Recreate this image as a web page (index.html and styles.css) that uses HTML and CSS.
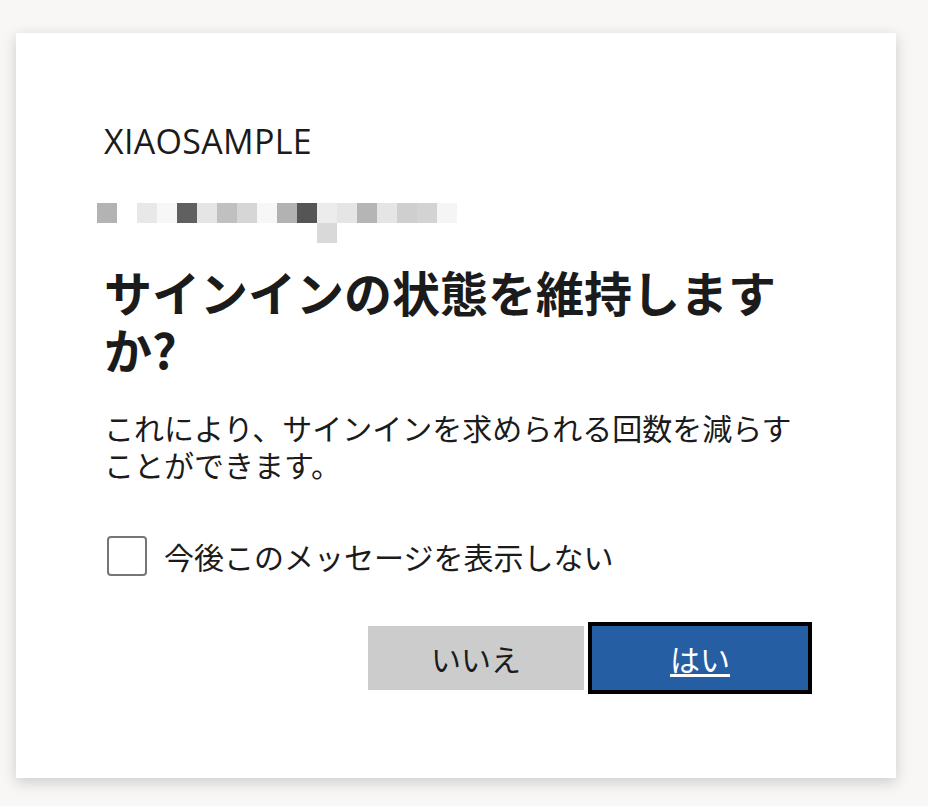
FILE: index.html
```html
<!DOCTYPE html>
<html lang="ja">
<head>
<meta charset="utf-8">
<title>サインインの状態を維持しますか?</title>
<link rel="stylesheet" href="styles.css">
</head>
<body>
<main class="card">
  <div class="brand">XIAOSAMPLE</div>
  <div class="mosaic" aria-hidden="true">
    <div class="mosaic-row">
      <span class="px" style="background:#b3b3b3"></span>
      <span class="px" style="background:#ffffff"></span>
      <span class="px" style="background:#e8e8e8"></span>
      <span class="px" style="background:#f7f7f7"></span>
      <span class="px" style="background:#606060"></span>
      <span class="px" style="background:#e5e5e5"></span>
      <span class="px" style="background:#c0c0c0"></span>
      <span class="px" style="background:#d6d6d6"></span>
      <span class="px" style="background:#f7f7f7"></span>
      <span class="px" style="background:#b2b2b2"></span>
      <span class="px" style="background:#555555"></span>
      <span class="px" style="background:#ececec"></span>
      <span class="px" style="background:#e5e5e5"></span>
      <span class="px" style="background:#b5b5b5"></span>
      <span class="px" style="background:#e5e5e5"></span>
      <span class="px" style="background:#cfcfcf"></span>
      <span class="px" style="background:#d3d3d3"></span>
      <span class="px" style="background:#f5f5f5"></span>
    </div>
    <div class="mosaic-row">
      <span class="px blank"></span><span class="px blank"></span><span class="px blank"></span>
      <span class="px blank"></span><span class="px blank"></span><span class="px blank"></span>
      <span class="px blank"></span><span class="px blank"></span><span class="px blank"></span>
      <span class="px blank"></span><span class="px blank"></span>
      <span class="px" style="background:#d9d9d9"></span>
    </div>
  </div>
  <h1 class="title">サインインの状態を維持しますか?</h1>
  <p class="desc">これにより、サインインを求められる回数を減らすことができます。</p>
  <label class="check">
    <span class="box"></span>
    <span class="check-label">今後このメッセージを表示しない</span>
  </label>
  <div class="actions">
    <button class="btn btn-no" type="button">いいえ</button>
    <button class="btn btn-yes" type="button"><span class="u">はい</span></button>
  </div>
</main>
</body>
</html>
```

FILE: styles.css
```css
html, body {
  margin: 0;
  padding: 0;
}
body {
  background: #f8f7f5;
  padding: 33px 16px;
  font-family: "Noto Sans CJK JP", "Noto Sans", sans-serif;
  color: #1b1b1b;
}
.card {
  width: 880px;
  box-sizing: border-box;
  background: #ffffff;
  padding: 88px;
  box-shadow: 0 4px 14px rgba(0, 0, 0, 0.18);
}
.brand {
  font-family: "Open Sans", "Noto Sans", sans-serif;
  font-size: 34px;
  line-height: 40px;
  letter-spacing: 0.3px;
  color: #1b1b1b;
}
.mosaic {
  margin: 42px 0 0 -7px;
  display: flex;
  flex-direction: column;
}
.mosaic-row {
  display: flex;
}
.px {
  display: block;
  width: 20px;
  height: 20px;
}
.px.blank {
  background: transparent;
}
.title {
  margin: 20px 0 0;
  font-size: 48px;
  line-height: 57px;
  font-weight: 700;
  color: #1b1b1b;
}
.desc {
  margin: 32px 0 0;
  font-size: 30px;
  line-height: 37px;
  color: #1b1b1b;
}
.check {
  margin-top: 53px;
  display: flex;
  align-items: center;
  gap: 17px;
  padding-left: 3px;
}
.box {
  width: 40px;
  height: 40px;
  box-sizing: border-box;
  border: 2px solid #767676;
  border-radius: 4px;
  flex: none;
}
.check-label {
  font-size: 30px;
  line-height: 40px;
}
.actions {
  margin-top: 50px;
  display: flex;
  justify-content: flex-end;
  gap: 8px;
}
.btn {
  width: 216px;
  height: 64px;
  border: none;
  font-family: "Noto Sans CJK JP", sans-serif;
  font-size: 30px;
  padding: 0;
  cursor: pointer;
}
.btn-no {
  background: #cccccc;
  color: #1b1b1b;
}
.btn-yes {
  background: #265ea3;
  color: #ffffff;
  outline: 4px solid #000000;
}
.u {
  text-decoration: underline;
  text-decoration-thickness: 3px;
  text-underline-offset: 3px;
}
```
